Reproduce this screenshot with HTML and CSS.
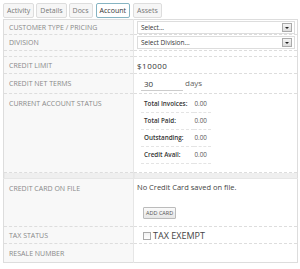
FILE: index.html
```html
<!DOCTYPE html>
<html>
	<head>
		<meta charset="UTF-8">
		<title>Account</title>
		<link rel="stylesheet" href="styles.css">
	</head>
	<body>
		<div id="con">
			<ul class="tabs">
				<li>Activity</li>
				<li>Details</li>
				<li>Docs</li>
				<li class="on">Account</li>
				<li>Assets</li>
			</ul>
			<table class="acct">
				<tr class="r1">
					<th>CUSTOMER TYPE / PRICING</th>
					<td><div class="sel"><span>Select...</span><i></i></div></td>
				</tr>
				<tr class="r2">
					<th>DIVISION</th>
					<td><div class="sel"><span>Select Division...</span><i></i></div></td>
				</tr>
				<tr class="gap"><th></th><td></td></tr>
				<tr class="r3">
					<th>CREDIT LIMIT</th>
					<td class="big money">$10000</td>
				</tr>
				<tr class="r4">
					<th>CREDIT NET TERMS</th>
					<td class="big"><input class="terms" type="text" value="30"/><span class="days">days</span></td>
				</tr>
				<tr class="status">
					<th>CURRENT ACCOUNT STATUS</th>
					<td>
						<table class="sum">
							<tr><th>Total Invoices:</th><td>0.00</td></tr>
							<tr><th>Total Paid:</th><td>0.00</td></tr>
							<tr><th>Outstanding:</th><td>0.00</td></tr>
							<tr><th>Credit Avail:</th><td>0.00</td></tr>
						</table>
					</td>
				</tr>
				<tr class="gap2"><th></th><td></td></tr>
				<tr class="card">
					<th>CREDIT CARD ON FILE</th>
					<td>
						<p class="nocard">No Credit Card saved on file.</p>
						<input class="btn" type="button" value="ADD CARD"/>
					</td>
				</tr>
				<tr class="r5">
					<th>TAX STATUS</th>
					<td class="tax"><span class="chk"></span>TAX EXEMPT</td>
				</tr>
				<tr class="r6">
					<th>RESALE NUMBER</th>
					<td></td>
				</tr>
			</table>
		</div>
	</body>
</html>
```
FILE: styles.css
```css
*{margin: 0;padding: 0;box-sizing: border-box;}
body{font-family: "Open Sans", "Noto Sans", sans-serif;color: #444;background: #fff;}
#con{padding: 3px 2px 0 3px;}
.tabs{display: flex;gap: 2px;list-style: none;height: 16px;}
.tabs li{
	font-size: 7px;
	color: #777;
	border: 1px solid #ddd;
	border-radius: 2px;
	background: #f6f6f6;
	padding: 0 3px;
	line-height: 13px;
	height: 15px;
}
.tabs li.on{
	color: #333;
	background: #fff;
	border: 1px solid #86b4c2;
	line-height: 13px;
	margin: 0 1px;
}
.acct{
	width: 100%;
	border-collapse: collapse;
	border: 1px solid #ddd;
}
.acct > tbody > tr > th,.acct > tbody > tr > td{
	border-bottom: 1px dashed #ddd;
	vertical-align: middle;
}
.acct > tbody > tr > th{
	width: 130px;
	background: #f8f8f8;
	border-right: 1px solid #e6e6e6;
	font-weight: normal;
	font-size: 7px;
	color: #888;
	text-align: left;
	padding: 0 5px;
}
.acct > tbody > tr > td{padding: 0 2px 0 3px;}
.r1 > th,.r1 > td{height: 15px;}
.r2 > th,.r2 > td{height: 16px;}
.gap > th,.gap > td{height: 6px;}
.r3 > th,.r3 > td{height: 17px;}
.r4 > th,.r4 > td{height: 20px;}
.r5 > th,.r5 > td{height: 17px;}
.r6 > th,.r6 > td{height: 19px;}
.sel{
	display: flex;
	align-items: center;
	justify-content: space-between;
	height: 13px;
	border: 1px solid #ddd;
	font-size: 6.5px;
	color: #333;
	padding: 0 2px 0 3px;
}
.sel i{
	width: 10px;
	height: 9px;
	border: 1px solid #aaa;
	background: linear-gradient(#f4f4f4, #ddd);
	position: relative;
}
.sel i:after{
	content: "";
	position: absolute;
	left: 2px;
	top: 3px;
	border: 2px solid transparent;
	border-top: 2px solid #222;
}
.big{font-size: 8px;color: #333;}
.money{letter-spacing: 0.5px;}
.terms{
	width: 42px;
	height: 15px;
	border: 0;
	border-bottom: 1px solid #ccc;
	font: 8px "Open Sans", sans-serif;
	color: #333;
	padding: 0 3px;
	margin-left: 4px;
	outline: none;
	vertical-align: middle;
}
.days{margin-left: 2px;color: #666;}
.status > th,.status > td{height: 79px;vertical-align: top !important;}
.status > th{padding-top: 5px !important;}
.status > td{padding-top: 1px !important;}
.sum{border-collapse: collapse;margin-left: 4px;}
.sum th,.sum td{
	font-size: 6.3px;
	color: #333;
	border-bottom: 1px dashed #e4e4e4;
	height: 17px;
	text-align: left;
	vertical-align: middle;
}
.sum th{font-weight: 600;padding: 0 7px 0 3px;}
.sum td{padding-right: 4px;color: #555;}
.gap2 > th,.gap2 > td{
	height: 6px;
	background: repeating-linear-gradient(90deg, #e9e9e9 0 1px, #f4f4f4 1px 2px) !important;
	border-bottom: 1px solid #e6e6e6 !important;
}
.card > th,.card > td{height: 48px;vertical-align: top !important;}
.card > th{padding-top: 5px !important;}
.card > td{padding-top: 3px !important;}
.nocard{font-size: 7.5px;color: #444;}
.btn{
	display: block;
	margin: 15px 0 0 6px;
	font: 5.5px "Open Sans", sans-serif;
	color: #555;
	padding: 1px 2px;
	border: 1px solid #bbb;
	border-radius: 1px;
	background: linear-gradient(#fafafa, #e6e6e6);
}
.tax{font-size: 9px;color: #444;}
.chk{
	display: inline-block;
	width: 8px;
	height: 8px;
	border: 1px solid #aaa;
	background: linear-gradient(#f2f2f2, #fff);
	vertical-align: -1px;
	margin: 0 2px 0 6px;
}
```
